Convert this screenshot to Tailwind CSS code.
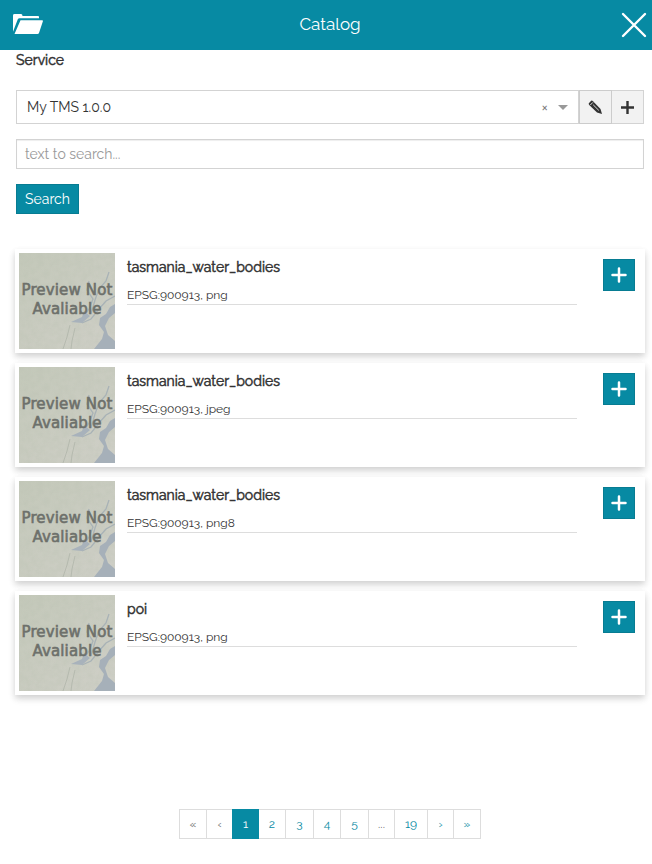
<!DOCTYPE html>
<html lang="en">
<head>
<meta charset="utf-8">
<title>Catalog</title>
<script src="https://cdn.jsdelivr.net/npm/@tailwindcss/browser@4"></script>
</head>
<body class="w-[652px] h-[864px] overflow-hidden bg-white text-[#333] font-[Raleway,Lato,'Open_Sans',sans-serif] text-[14px] leading-5">
<svg class="absolute w-0 h-0">
  <defs>
    <filter id="grain" x="0" y="0" width="100%" height="100%">
      <feTurbulence type="fractalNoise" baseFrequency="0.16" numOctaves="3" seed="4"/>
      <feColorMatrix values="0 0 0 0 .5  0 0 0 0 .54  0 0 0 0 .45  .9 0 0 0 -.28"/>
    </filter>
    <linearGradient id="land" x1="0" y1="0" x2="1" y2="1"><stop offset="0" stop-color="#c3c8b9"/><stop offset="1" stop-color="#cfcfc7"/></linearGradient>
  </defs>
  <symbol id="preview" viewBox="0 0 96 96">
    <rect width="96" height="96" fill="url(#land)"/>
    <rect width="96" height="96" filter="url(#grain)" opacity=".7"/>
    <path d="M96 51L91 54L87 61L81 65L80 72L85 79L83 86L75 96H96V88L89 82L86 73L90 65L96 60Z" fill="#a6b0b9"/>
    <path d="M70 28L68 37L74 46L70 56L65 64M90 19L87 28L80 36L76 47L72 61M96 43L87 48L80 56L72 66L63 70" fill="none" stroke="#a8b2b6" stroke-width="1.3"/>
    <path d="M65 58L63 64L52 69L63 70L71 63Z" fill="#a8b2bb"/>
    <path d="M51 72L48 84L44 96M56 75L53 88L52 96" fill="none" stroke="#acb1a6" stroke-width=".7"/>
  </symbol>
</svg>

<header class="h-[50px] bg-[#078aa3] text-white flex items-center justify-between pl-[13px] pr-[5px]">
  <svg class="w-[30px] h-[21px] -mt-[2px]" viewBox="0 0 30 22" preserveAspectRatio="none" fill="white"><path d="M0 18.500V1.500Q0 0 1.500 0H8Q9.500 0 9.500 2H25Q26 2 26 3V4.500H6.500Q5.300 4.500 4.800 5.500Z"/><path d="M7.500 6.500H29Q30.300 6.500 29.900 7.700L26 20Q25.600 21 24.500 21H1.500Z"/></svg>
  <h1 class="text-[17px] leading-6 -mt-[2px] -ml-1">Catalog</h1>
  <svg class="w-[26px] h-[26px]" viewBox="0 0 26 26" fill="none" stroke="white" stroke-width="2.400" stroke-linecap="round"><path d="M2 2L24 24M24 2L2 24"/></svg>
</header>

<main class="px-4 pr-2 h-[759px]">
  <div class="h-10 [-webkit-text-stroke:0.5px_#333]">Service</div>
  <div class="flex h-[34px]">
    <div class="w-[563px] border border-[#d3d3d3] flex items-center pl-[10px] pr-[10px]">
      <span class="grow">My TMS 1.0.0</span>
      <span class="text-[14px] text-[#777] mr-[10px]">×</span>
      <svg class="w-[10px] h-[5px]" viewBox="0 0 10 5"><path d="M0 0H10L5 5Z" fill="#999"/></svg>
    </div>
    <button class="w-[33px] border border-[#ccc] bg-[#f2f2f2] flex items-center justify-center">
      <svg class="w-[15px] h-[15px]" viewBox="0 0 15 15"><path d="M.8 3.200L3.200 .8Q4 .3 5 1.200L12.500 9L14 14L9 12.500L1.200 5Q.4 4 .8 3.200Z" fill="#333"/><path d="M2.300 5L4.900 2.400M5.200 4.800L10.800 10.400" stroke="#eee" stroke-width=".9"/></svg>
    </button>
    <button class="w-[32px] border border-l-0 border-[#d3d3d3] bg-[#f2f2f2] flex items-center justify-center">
      <svg class="w-[13px] h-[13px]" viewBox="0 0 13 13"><path d="M6.500 0V13M0 6.500H13" stroke="#333" stroke-width="2.400"/></svg>
    </button>
  </div>
  <div class="mt-[15px] h-[30px] border border-[#d3d3d3] shadow-[inset_0_1px_1px_rgba(0,0,0,.07)] px-2 flex items-center text-[#999]">text to search...</div>
  <button class="mt-[15px] w-[63px] h-[30px] bg-[#078aa3] border border-[#077c92] text-white">Search</button>

  <section class="mt-[35px] -ml-px -mr-px w-[630px] flex flex-col gap-[10px]">
    <article class="h-[104px] shadow-[0_3px_6px_rgba(0,0,0,.12),0_4px_8px_rgba(0,0,0,.08)] bg-white p-1 flex">
      <div class="relative w-24 h-24"><svg class="w-24 h-24"><use href="#preview"/></svg><div class="absolute inset-0 pt-[28px] text-center whitespace-nowrap font-['DejaVu_Sans'] text-[15px] leading-[18.500px] text-[#6d706b] [-webkit-text-stroke:0.6px_#6d706b]"><div class="-mx-1 tracking-[0.15px]">Preview Not</div><div class="tracking-[0.15px]">Avaliable</div></div></div>
      <div class="ml-3 w-[450px] pt-1"><h2 class="h-[26px] [-webkit-text-stroke:0.5px_#333]">tasmania_water_bodies</h2><p class="h-[22px] border-b border-[#ddd] text-[12px] leading-[24px]">EPSG:900913, png</p></div>
      <button class="ml-[26px] mt-[6px] w-8 h-8 bg-[#078aa3] border border-[#077c92] flex items-center justify-center"><svg class="w-[16px] h-[16px] -mt-px" viewBox="0 0 16 16"><path d="M8 1.500V14.500M1.500 8H14.500" stroke="white" stroke-width="2.500" stroke-linecap="round"/></svg></button>
    </article>
    <article class="h-[104px] shadow-[0_3px_6px_rgba(0,0,0,.12),0_4px_8px_rgba(0,0,0,.08)] bg-white p-1 flex">
      <div class="relative w-24 h-24"><svg class="w-24 h-24"><use href="#preview"/></svg><div class="absolute inset-0 pt-[28px] text-center whitespace-nowrap font-['DejaVu_Sans'] text-[15px] leading-[18.500px] text-[#6d706b] [-webkit-text-stroke:0.6px_#6d706b]"><div class="-mx-1 tracking-[0.15px]">Preview Not</div><div class="tracking-[0.15px]">Avaliable</div></div></div>
      <div class="ml-3 w-[450px] pt-1"><h2 class="h-[26px] [-webkit-text-stroke:0.5px_#333]">tasmania_water_bodies</h2><p class="h-[22px] border-b border-[#ddd] text-[12px] leading-[24px]">EPSG:900913, jpeg</p></div>
      <button class="ml-[26px] mt-[6px] w-8 h-8 bg-[#078aa3] border border-[#077c92] flex items-center justify-center"><svg class="w-[16px] h-[16px] -mt-px" viewBox="0 0 16 16"><path d="M8 1.500V14.500M1.500 8H14.500" stroke="white" stroke-width="2.500" stroke-linecap="round"/></svg></button>
    </article>
    <article class="h-[104px] shadow-[0_3px_6px_rgba(0,0,0,.12),0_4px_8px_rgba(0,0,0,.08)] bg-white p-1 flex">
      <div class="relative w-24 h-24"><svg class="w-24 h-24"><use href="#preview"/></svg><div class="absolute inset-0 pt-[28px] text-center whitespace-nowrap font-['DejaVu_Sans'] text-[15px] leading-[18.500px] text-[#6d706b] [-webkit-text-stroke:0.6px_#6d706b]"><div class="-mx-1 tracking-[0.15px]">Preview Not</div><div class="tracking-[0.15px]">Avaliable</div></div></div>
      <div class="ml-3 w-[450px] pt-1"><h2 class="h-[26px] [-webkit-text-stroke:0.5px_#333]">tasmania_water_bodies</h2><p class="h-[22px] border-b border-[#ddd] text-[12px] leading-[24px]">EPSG:900913, png8</p></div>
      <button class="ml-[26px] mt-[6px] w-8 h-8 bg-[#078aa3] border border-[#077c92] flex items-center justify-center"><svg class="w-[16px] h-[16px] -mt-px" viewBox="0 0 16 16"><path d="M8 1.500V14.500M1.500 8H14.500" stroke="white" stroke-width="2.500" stroke-linecap="round"/></svg></button>
    </article>
    <article class="h-[104px] shadow-[0_3px_6px_rgba(0,0,0,.12),0_4px_8px_rgba(0,0,0,.08)] bg-white p-1 flex">
      <div class="relative w-24 h-24"><svg class="w-24 h-24"><use href="#preview"/></svg><div class="absolute inset-0 pt-[28px] text-center whitespace-nowrap font-['DejaVu_Sans'] text-[15px] leading-[18.500px] text-[#6d706b] [-webkit-text-stroke:0.6px_#6d706b]"><div class="-mx-1 tracking-[0.15px]">Preview Not</div><div class="tracking-[0.15px]">Avaliable</div></div></div>
      <div class="ml-3 w-[450px] pt-1"><h2 class="h-[26px] [-webkit-text-stroke:0.5px_#333]">poi</h2><p class="h-[22px] border-b border-[#ddd] text-[12px] leading-[24px]">EPSG:900913, png</p></div>
      <button class="ml-[26px] mt-[6px] w-8 h-8 bg-[#078aa3] border border-[#077c92] flex items-center justify-center"><svg class="w-[16px] h-[16px] -mt-px" viewBox="0 0 16 16"><path d="M8 1.500V14.500M1.500 8H14.500" stroke="white" stroke-width="2.500" stroke-linecap="round"/></svg></button>
    </article>
  </section>
</main>

<nav class="ml-[179px] w-[302px] h-[30px] flex border border-[#ddd] text-[12px] leading-7 text-center text-[#078aa3]">
  <span class="w-[27px] border-r border-[#ddd] text-[#666]">«</span>
  <span class="w-[25px] text-[#666]">‹</span>
  <span class="w-[27px] -my-px leading-[30px] bg-[#078aa3] text-white">1</span>
  <span class="w-[27px] border-r border-[#ddd]">2</span>
  <span class="w-[28px] border-r border-[#ddd]">3</span>
  <span class="w-[27px] border-r border-[#ddd]">4</span>
  <span class="w-[28px] border-r border-[#ddd]">5</span>
  <span class="w-[26px] border-r border-[#ddd] text-[#666]">...</span>
  <span class="w-[33px] border-r border-[#ddd]">19</span>
  <span class="w-[26px] border-r border-[#ddd]">›</span>
  <span class="w-[26px]">»</span>
</nav>
</body>
</html>
